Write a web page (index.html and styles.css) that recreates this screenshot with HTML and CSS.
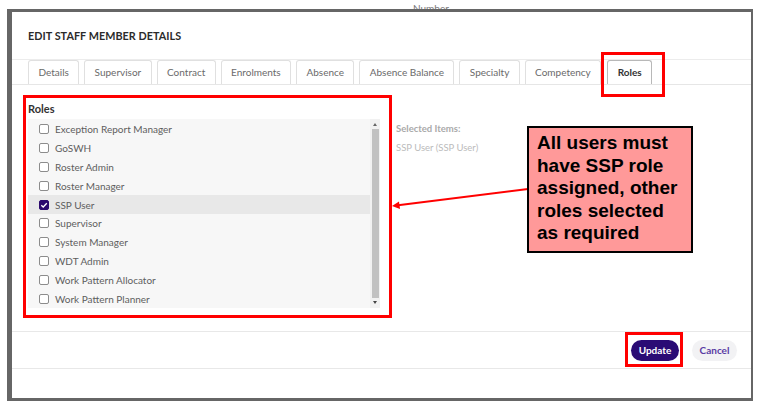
FILE: index.html
```html
<!DOCTYPE html>
<html>
<head>
<meta charset="utf-8">
<link rel="stylesheet" href="styles.css">
</head>
<body>
<div class="page">
  <div class="bg-label"><span>Number</span></div>
  <div class="frame">
    <div class="dialog">
      <div class="header"><h1 class="title">EDIT STAFF MEMBER DETAILS</h1></div>
      <div class="tabs">
        <div class="tab">Details</div>
        <div class="tab">Supervisor</div>
        <div class="tab">Contract</div>
        <div class="tab">Enrolments</div>
        <div class="tab">Absence</div>
        <div class="tab">Absence Balance</div>
        <div class="tab">Specialty</div>
        <div class="tab">Competency</div>
        <div class="tab active">Roles</div>
      </div>
      <div class="content">
        <div class="label">Roles</div>
        <div class="picker">
          <div class="list">
            <div class="rows">
              <div class="row"><span class="box"></span><span>Exception Report Manager</span></div>
              <div class="row"><span class="box"></span><span>GoSWH</span></div>
              <div class="row"><span class="box"></span><span>Roster Admin</span></div>
              <div class="row"><span class="box"></span><span>Roster Manager</span></div>
              <div class="row selected"><span class="box checked"><svg viewBox="0 0 10 10" width="10" height="10"><path d="M2.3 5.2 L4.2 7 L7.8 3.2" fill="none" stroke="#fff" stroke-width="1.3"/></svg></span><span>SSP User</span></div>
              <div class="row"><span class="box"></span><span>Supervisor</span></div>
              <div class="row"><span class="box"></span><span>System Manager</span></div>
              <div class="row"><span class="box"></span><span>WDT Admin</span></div>
              <div class="row"><span class="box"></span><span>Work Pattern Allocator</span></div>
              <div class="row"><span class="box"></span><span>Work Pattern Planner</span></div>
            </div>
            <div class="scrollbar">
              <div class="arrow up"></div>
              <div class="thumb"></div>
              <div class="arrow down"></div>
            </div>
          </div>
          <div class="selected-col">
            <div class="sel-title">Selected Items:</div>
            <div class="sel-item">SSP User (SSP User)</div>
          </div>
        </div>
      </div>
      <div class="footer">
        <button class="btn primary">Update</button>
        <button class="btn secondary">Cancel</button>
      </div>
    </div>
  </div>

  <div class="mark mark-tab"></div>
  <div class="mark mark-roles"></div>
  <div class="mark mark-update"></div>
  <svg class="arrow-line" width="757" height="409" viewBox="0 0 757 409">
    <line x1="528" y1="189" x2="398" y2="205.3" stroke="#ff0000" stroke-width="2"/>
    <path d="M392 206 L399 201.5 L400 209 Z" fill="#ff0000"/>
  </svg>
  <div class="callout">All users must<br>have SSP role<br>assigned, other<br>roles selected<br>as required</div>
</div>
</body>
</html>
```
FILE: styles.css
```css
* { box-sizing: border-box; }
html, body { margin: 0; padding: 0; background: #fff; }
body { font-family: Lato, "Open Sans", sans-serif; }
.page { position: relative; width: 757px; height: 409px; overflow: hidden; }

.bg-label { height: 9px; overflow: hidden; padding-left: 413px; padding-top: 3px; font-size: 10px; line-height: 10px; color: #777; }

.frame {
  margin-left: 7px;
  width: 746px;
  height: 392px;
  border-style: solid;
  border-color: #666;
  border-width: 3px 2px 3px 5px;
  background: #fff;
}
.dialog { height: 100%; display: flex; flex-direction: column; }

.header { height: 48px; display: flex; align-items: center; padding-left: 16px; border-bottom: 1px solid #ececec; }
.title { margin: 0; font-size: 10.8px; font-weight: 700; color: #2b2b2b; letter-spacing: 0.05px; }

.tabs { display: flex; gap: 5px; padding-left: 16px; border-bottom: 1px solid #e6e6e6; height: 25px; align-items: flex-end; }
.tab {
  height: 24px;
  padding: 0 9.4px;
  border: 1px solid #e0e0e0;
  border-bottom: none;
  border-radius: 3px 3px 0 0;
  font-size: 10px;
  line-height: 23px;
  color: #6a6a6a;
}
.tab.active { border-color: #b8b8b8; color: #333; font-weight: 700; padding: 0 9.5px; margin-left: 1px; }

.content { padding: 17px 16px 23px 16px; }
.label { font-size: 11px; line-height: 14px; font-weight: 700; color: #333; margin-bottom: 3px; }
.picker { display: flex; gap: 16px; }
.list { width: 352px; height: 189px; background: #f7f7f7; display: flex; }
.rows { flex: 1; padding-top: 1px; }
.row { height: 18.8px; display: flex; align-items: center; padding-left: 11px; font-size: 10px; color: #5e5e5e; }
.row.selected { background: #e8e8e8; }
.box { width: 10px; height: 10px; border: 1px solid #8c8c8c; border-radius: 2px; background: #fff; margin-right: 6px; display: flex; }
.box.checked { background: #2c0a6e; border-color: #2c0a6e; }
.box.checked svg { margin: -1px; }
.scrollbar { width: 10px; display: flex; flex-direction: column; align-items: center; background: #f1f1f1; }
.thumb { flex: 1; width: 7px; background: #c1c1c1; margin: 3px 0; }
.arrow { width: 0; height: 0; border-left: 2.5px solid transparent; border-right: 2.5px solid transparent; margin: 3px 0 0; }
.arrow.up { border-bottom: 3px solid #666; margin-top: 4px; }
.arrow.down { border-top: 3px solid #444; margin: 0 0 4px; }

.selected-col { font-size: 9.5px; line-height: 18.8px; padding-top: 1px; }
.sel-title { color: #aaa; font-weight: 700; }
.sel-item { color: #bbb; }

.footer { height: 38px; border-top: 1px solid #e8e8e8; border-bottom: 1px solid #e8e8e8; display: flex; justify-content: flex-end; align-items: center; gap: 13px; padding-right: 14px; }
.btn { border: none; height: 21px; border-radius: 11px; font-family: Lato, "Open Sans", sans-serif; font-size: 10px; font-weight: 700; padding: 0; }
.btn.primary { width: 48px; background: #2a0b75; color: #fff; }
.btn.secondary { width: 45px; background: #f2f2f4; color: #5a3ca4; }

.mark { position: absolute; border: 3px solid #ff0000; }
.mark-tab { left: 601px; top: 52px; width: 64px; height: 45px; }
.mark-roles { left: 23px; top: 95px; width: 369px; height: 223px; }
.mark-update { left: 625px; top: 332px; width: 58px; height: 35px; }
.arrow-line { position: absolute; left: 0; top: 0; }
.callout {
  position: absolute;
  left: 527px; top: 126px; width: 166px; height: 127px;
  background: #ff9999;
  border: 2px solid #000;
  padding: 4px 0 0 8px;
  font-family: "Liberation Sans", Arial, sans-serif;
  font-weight: 700;
  font-size: 19px;
  line-height: 22.5px;
  color: #000;
}
```
